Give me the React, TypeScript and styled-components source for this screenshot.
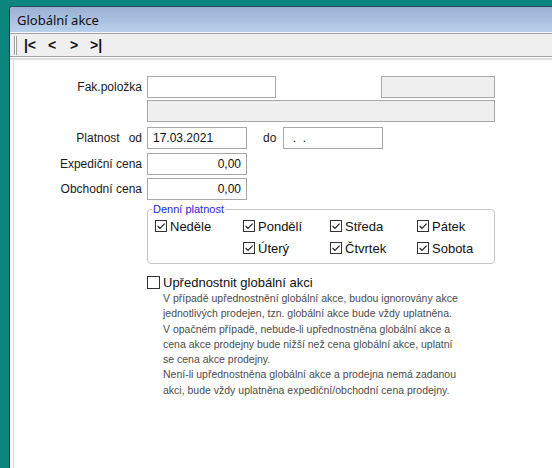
import React from 'react';
import styled, { createGlobalStyle } from 'styled-components';

const GlobalStyle = createGlobalStyle`
  html, body {
    margin: 0;
    height: 100%;
  }
  body {
    background: #0c857f;
    overflow: hidden;
    font-family: "Liberation Sans", Arial, sans-serif;
  }
  #root {
    height: 100%;
  }
`;

const Desktop = styled.div`
  height: 100%;
  box-sizing: border-box;
  padding: 6px 0 0 9px;
  background: #0c857f;
  display: flex;
`;

const Window = styled.div`
  flex: 1;
  display: flex;
  flex-direction: column;
  background: #fff;
  border-left: 1px solid #1f3a3a;
  border-top: 1px solid #2c4a5c;
  border-top-left-radius: 4px;
  overflow: hidden;
`;

const TitleBar = styled.div`
  height: 25px;
  display: flex;
  align-items: center;
  padding-left: 7px;
  background: linear-gradient(#9aafd3, #b9d0ec);
  border-bottom: 1px solid #f4f7fb;
  font-family: "Noto Sans", "Liberation Sans", sans-serif;
  font-size: 13px;
  color: #101010;
`;

const Toolbar = styled.div`
  height: 22px;
  display: flex;
  align-items: center;
  padding-left: 4px;
  background: #efefef;
  border-top: 1px solid #a4a4a4;
  border-bottom: 1px solid #a4a4a4;
`;

const Grip = styled.div`
  width: 1px;
  height: 19px;
  margin-right: 2px;
  border-left: 1px solid #a0a0a0;
  border-right: 1px solid #a0a0a0;
  background: #fff;
`;

const NavButton = styled.span`
  width: 22px;
  text-align: center;
  font-weight: bold;
  font-size: 14px;
  color: #111;
  cursor: default;
`;

const Separator = styled.div`
  border-top: 1px solid #fff;
  border-bottom: 2px solid #dedede;
`;

const Body = styled.div`
  flex: 1;
  margin-left: 3px;
  border-left: 1px solid #d6d6d6;
  padding-top: 16px;
`;

const Row = styled.div<{ $top?: number }>`
  display: flex;
  align-items: center;
  height: 22px;
  margin-top: ${p => p.$top ?? 0}px;
`;

const Label = styled.div`
  width: 133px;
  box-sizing: border-box;
  padding-right: 5px;
  display: flex;
  justify-content: flex-end;
  gap: 9px;
  font-size: 12px;
  color: #1a1a1a;
`;

const Field = styled.div<{ $width: number; $muted?: boolean; $right?: boolean; $left?: number }>`
  width: ${p => p.$width}px;
  height: 22px;
  box-sizing: border-box;
  margin-left: ${p => p.$left ?? 0}px;
  padding: 0 5px;
  border: 1px solid #a8a8a8;
  background: ${p => (p.$muted ? '#efefef' : '#fff')};
  font-size: 12px;
  line-height: 20px;
  color: #111;
  text-align: ${p => (p.$right ? 'right' : 'left')};
  white-space: pre;
`;

const Word = styled.span<{ $left: number }>`
  margin-left: ${p => p.$left}px;
  font-size: 12px;
  color: #1a1a1a;
`;

const Group = styled.fieldset`
  width: 348px;
  min-width: 0;
  box-sizing: border-box;
  margin: 3px 0 0 133px;
  padding: 0 0 4px 7px;
  border: 1px solid #c6c6c6;
  border-radius: 4px;
`;

const Legend = styled.legend`
  margin-left: -3px;
  padding: 0 1px;
  font-size: 11px;
  line-height: 12px;
  color: #1f1fd8;
`;

const DayGrid = styled.div`
  display: grid;
  grid-template-columns: 88px 87px 87px 1fr;
  grid-auto-rows: 22px;
`;

const Day = styled.label<{ $col: number }>`
  grid-column: ${p => p.$col};
  display: flex;
  align-items: center;
  gap: 3px;
  font-size: 13px;
  color: #111;
`;

const Box = styled.span<{ $size: number }>`
  width: ${p => p.$size}px;
  height: ${p => p.$size}px;
  box-sizing: border-box;
  border: 1px solid #333;
  background: #fff;
  display: inline-flex;
  align-items: center;
  justify-content: center;
  flex-shrink: 0;
`;

const Priority = styled.label`
  display: flex;
  align-items: center;
  gap: 3px;
  height: 17px;
  margin: 10px 0 0 133px;
  font-size: 13px;
  color: #111;
`;

const Note = styled.p`
  margin: 0 0 0 149px;
  font-size: 10.5px;
  line-height: 15.3px;
  color: #4c4c4c;
`;

const Check = ({ checked, size = 12 }: { checked: boolean; size?: number }) => (
  <Box $size={size}>
    {checked && (
      <svg width={size - 2} height={size - 2} viewBox="0 0 10 10">
        <polyline points="1.6,5 4,7.4 8.6,2.6" fill="none" stroke="#222" strokeWidth="1.2" />
      </svg>
    )}
  </Box>
);

const days = [
  { name: 'Neděle', col: 1 },
  { name: 'Pondělí', col: 2 },
  { name: 'Středa', col: 3 },
  { name: 'Pátek', col: 4 },
  { name: 'Úterý', col: 2 },
  { name: 'Čtvrtek', col: 3 },
  { name: 'Sobota', col: 4 },
];

const noteLines = [
  'V případě upřednostnění globální akce, budou ignorovány akce',
  'jednotlivých prodejen, tzn. globální akce bude vždy uplatněna.',
  'V opačném případě, nebude-li upřednostněna globální akce a',
  'cena akce prodejny bude nižší než cena globální akce, uplatní',
  'se cena akce prodejny.',
  'Není-li upřednostněna globální akce a prodejna nemá zadanou',
  'akci, bude vždy uplatněna expediční/obchodní cena prodejny.',
];

const App = () => (
  <>
    <GlobalStyle />
    <Desktop>
      <Window>
        <TitleBar>Globální akce</TitleBar>
        <Toolbar>
          <Grip />
          {['|<', '<', '>', '>|'].map(n => (
            <NavButton key={n}>{n}</NavButton>
          ))}
        </Toolbar>
        <Separator />
        <Body>
          <Row>
            <Label>Fak.položka</Label>
            <Field $width={129} />
            <Field $width={114} $left={105} $muted />
          </Row>
          <Row $top={2}>
            <Label />
            <Field $width={348} $muted />
          </Row>
          <Row $top={5}>
            <Label>
              <span>Platnost</span>
              <span>od</span>
            </Label>
            <Field $width={100}>17.03.2021</Field>
            <Word $left={16}>do</Word>
            <Field $width={100} $left={7}>{' .  .'}</Field>
          </Row>
          <Row $top={4}>
            <Label>Expediční cena</Label>
            <Field $width={100} $right>0,00</Field>
          </Row>
          <Row $top={3}>
            <Label>Obchodní cena</Label>
            <Field $width={100} $right>0,00</Field>
          </Row>
          <Group>
            <Legend>Denní platnost</Legend>
            <DayGrid>
              {days.map(d => (
                <Day key={d.name} $col={d.col}>
                  <Check checked />
                  {d.name}
                </Day>
              ))}
            </DayGrid>
          </Group>
          <Priority>
            <Check checked={false} size={13} />
            Upřednostnit globální akci
          </Priority>
          <Note>
            {noteLines.map(l => (
              <React.Fragment key={l}>
                {l}
                <br />
              </React.Fragment>
            ))}
          </Note>
        </Body>
      </Window>
    </Desktop>
  </>
);

export default App;
